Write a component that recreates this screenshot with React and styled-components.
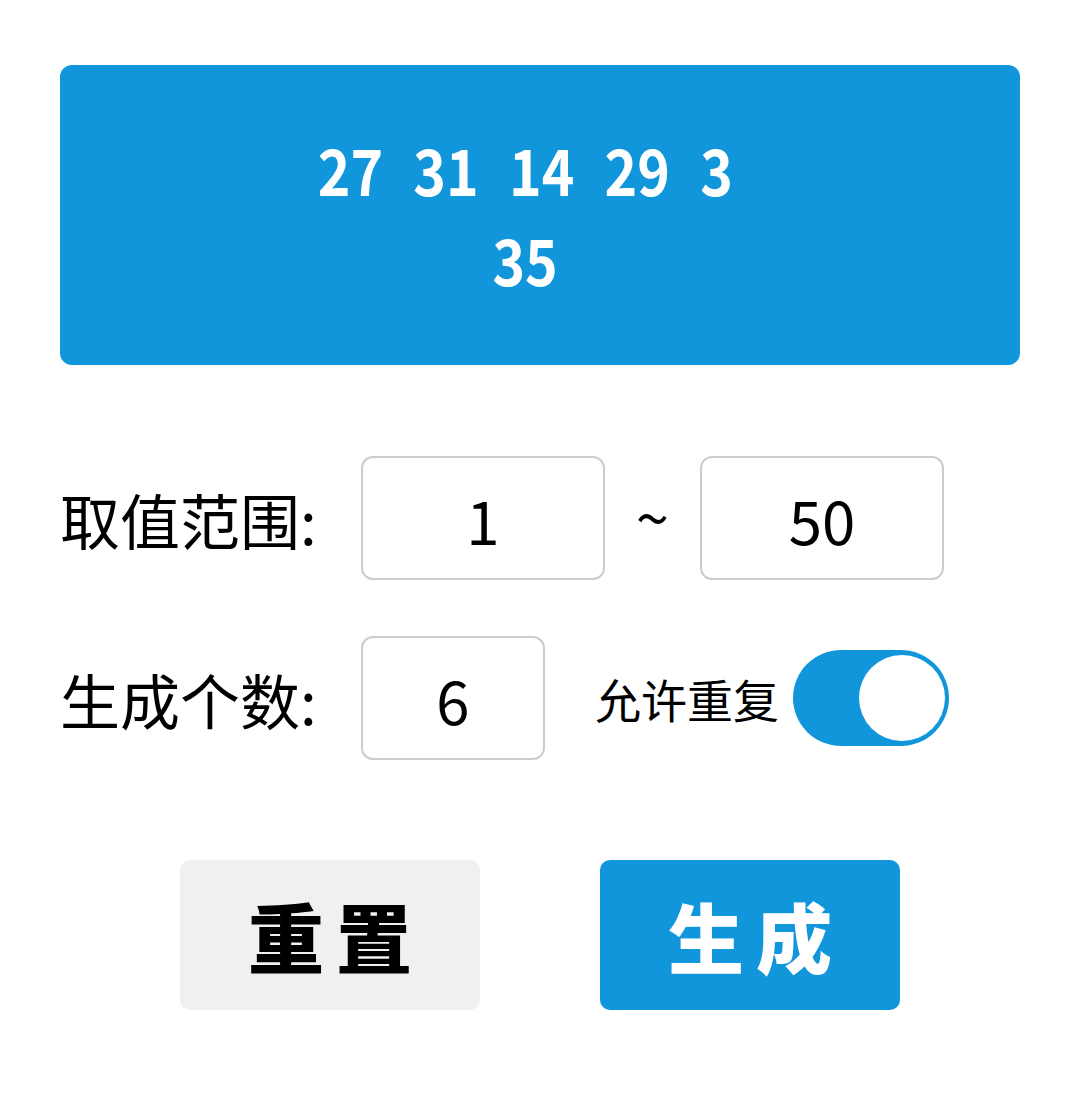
import { useState } from 'react';
import styled, { createGlobalStyle } from 'styled-components';

const Global = createGlobalStyle`
  html, body {
    margin: 0;
    padding: 0;
    background: #fff;
  }
  body {
    font-family: "Noto Sans CJK SC", "Noto Sans", sans-serif;
  }
`

const blue = '#1296db';

const Page = styled.div`
  padding: 65px 60px 0 60px;
  width: 1080px;
  box-sizing: border-box;
`

const ResultCard = styled.div`
  height: 300px;
  background-color: ${blue};
  border-radius: 12px;
  display: flex;
  flex-direction: column;
  align-items: center;
  justify-content: center;
  color: #fff;
  font-weight: 700;
  font-size: 64px;
  line-height: 90px;
  padding-bottom: 4px;
  box-sizing: border-box;
`

// 숫자 줄 - 좁은 글꼴처럼 보이게
const NumLine = styled.div`
  display: flex;
  transform: scaleX(0.865);
`

const Num = styled.span`
  margin-right: 35px;
`

const Form = styled.div`
  margin-top: 91px;
  display: flex;
  flex-direction: column;
  gap: 56px;
`

const Row = styled.div`
  display: flex;
  align-items: center;
  height: 124px;
`

const Label = styled.span`
  width: 301px;
  font-size: 60px;
  color: #000;
  flex-shrink: 0;
`

const NumInput = styled.input`
  width: ${props => props.$w}px;
  height: 124px;
  box-sizing: border-box;
  border: 2px solid #cccccc;
  border-radius: 12px;
  font-family: "Noto Sans CJK SC", "Noto Sans", sans-serif;
  font-size: 60px;
  text-align: center;
  color: #000;
  background: #fff;
  outline: none;
  padding: 0;
`

const Tilde = styled.span`
  width: 95px;
  text-align: center;
  font-size: 60px;
  color: #000;
  margin-top: -8px;
`

const SwitchLabel = styled.span`
  margin-left: 50px;
  font-size: 46px;
  color: #000;
`

const Track = styled.button`
  margin-left: 14px;
  width: 156px;
  height: 96px;
  border: none;
  border-radius: 48px;
  background-color: ${props => (props.$on ? blue : '#ccc')};
  display: flex;
  align-items: center;
  justify-content: ${props => (props.$on ? 'flex-end' : 'flex-start')};
  padding: 0 4px;
  box-sizing: border-box;
  cursor: pointer;
`

const Knob = styled.span`
  width: 86px;
  height: 86px;
  border-radius: 50%;
  background: #fff;
`

const Buttons = styled.div`
  margin-top: 100px;
  display: flex;
  justify-content: center;
  gap: 120px;
`

const ActionBtn = styled.button`
  width: 300px;
  height: 150px;
  border: none;
  border-radius: 10px;
  background-color: ${props => (props.$primary ? blue : '#f0f0f0')};
  color: ${props => (props.$primary ? '#fff' : '#000')};
  font-family: "Noto Sans CJK SC", "Noto Sans", sans-serif;
  font-size: 76px;
  font-weight: 900;
  letter-spacing: 12px;
  padding: 0 0 0 12px;
  cursor: pointer;
`

export default function App() {
  const [nums] = useState([27, 31, 14, 29, 3, 35]);
  const [repeat, setRepeat] = useState(true);

  return (
    <Page>
      <Global />
      <ResultCard>
        <NumLine>
          {nums.slice(0, 5).map((n, i) => <Num key={i}>{n}</Num>)}
        </NumLine>
        <NumLine>
          {nums.slice(5).map((n, i) => <Num key={i}>{n}</Num>)}
        </NumLine>
      </ResultCard>
      <Form>
        <Row>
          <Label>取值范围:</Label>
          <NumInput $w={244} defaultValue="1" />
          <Tilde>~</Tilde>
          <NumInput $w={244} defaultValue="50" />
        </Row>
        <Row>
          <Label>生成个数:</Label>
          <NumInput $w={184} defaultValue="6" />
          <SwitchLabel>允许重复</SwitchLabel>
          <Track $on={repeat} onClick={() => setRepeat(!repeat)}>
            <Knob />
          </Track>
        </Row>
      </Form>
      <Buttons>
        <ActionBtn>重置</ActionBtn>
        <ActionBtn $primary>生成</ActionBtn>
      </Buttons>
    </Page>
  );
}
